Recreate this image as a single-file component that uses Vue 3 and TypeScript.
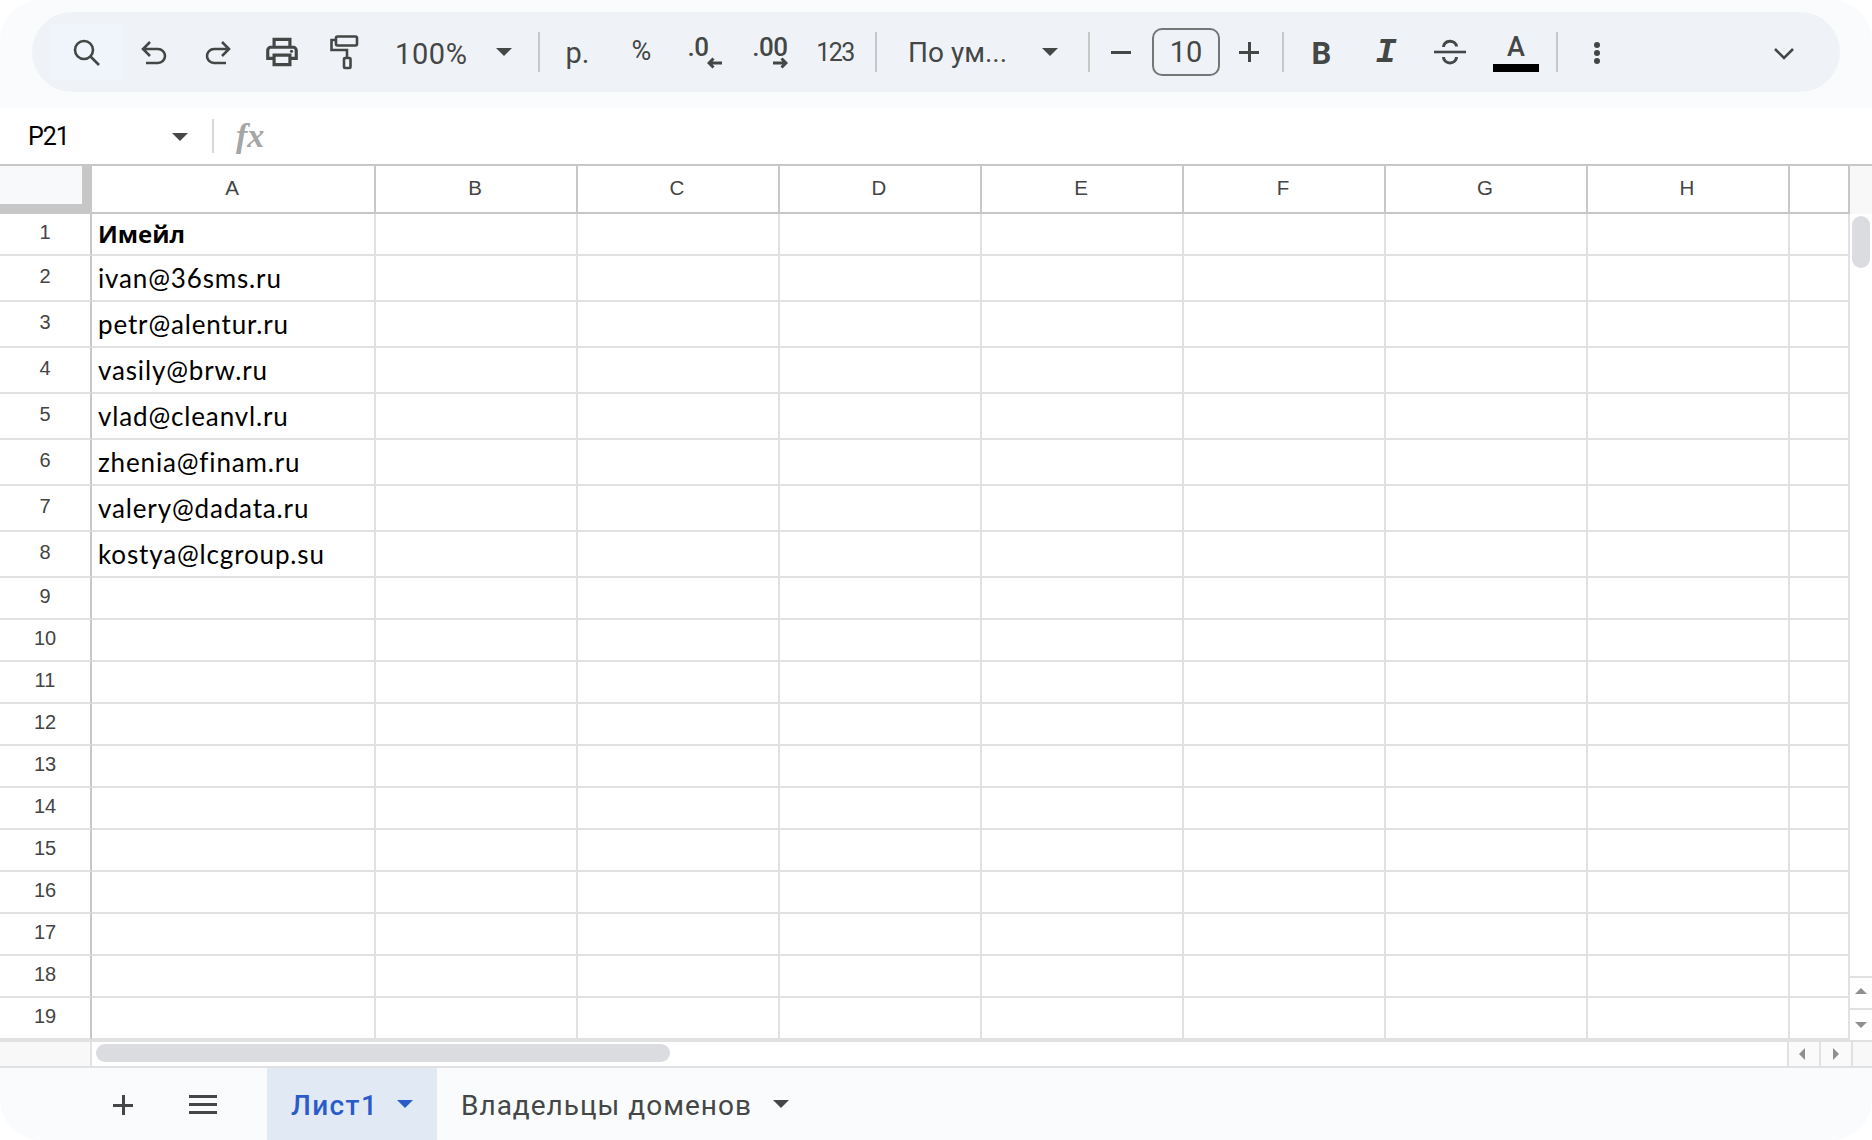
<script setup lang="ts">
const columns: string[] = ['A', 'B', 'C', 'D', 'E', 'F', 'G', 'H', '']
const emails: Record<number, string> = {
  1: 'Имейл',
  2: 'ivan@36sms.ru',
  3: 'petr@alentur.ru',
  4: 'vasily@brw.ru',
  5: 'vlad@cleanvl.ru',
  6: 'zhenia@finam.ru',
  7: 'valery@dadata.ru',
  8: 'kostya@lcgroup.su'
}
const rows: number[] = Array.from({ length: 19 }, (_, i) => i + 1)
const blanks: number[] = Array.from({ length: 8 }, (_, i) => i)
</script>

<template>
  <div class="page">
    <header class="topbar">
      <div class="pill">
        <div class="slot search">
          <svg width="34" height="34" viewBox="0 0 34 34" class="ic"><circle cx="14" cy="13" r="9" /><path d="M20.5 19.5 L29 28" /></svg>
        </div>
        <div class="slot w64">
          <svg width="30" height="30" viewBox="0 0 30 30" class="ic"><path d="M11 5 L4 12 L11 19 M4 12 H19 A7 7 0 0 1 19 26 H7" /></svg>
        </div>
        <div class="slot w64">
          <svg width="30" height="30" viewBox="0 0 30 30" class="ic"><path d="M19 5 L26 12 L19 19 M26 12 H11 A7 7 0 0 0 11 26 H23" /></svg>
        </div>
        <div class="slot w64">
          <svg width="38" height="38" viewBox="0 0 24 24" class="fill"><path d="M19 8h-1V3H6v5H5c-1.66 0-3 1.34-3 3v6h4v4h12v-4h4v-6c0-1.66-1.34-3-3-3zM8 5h8v3H8V5zm8 12v2H8v-4h8v2zm2-2v-2H6v2H4v-4c0-.55.45-1 1-1h14c.55 0 1 .45 1 1v4h-2z" /><circle cx="18" cy="11.5" r="1" /></svg>
        </div>
        <div class="slot w60">
          <svg width="30" height="36" viewBox="0 0 30 36" class="ic"><rect x="7" y="2.5" width="21" height="9" rx="1.5" /><path d="M7 6 H2.5 V16 H18 V23" /><rect x="15" y="24" width="6.5" height="10" rx="1" /></svg>
        </div>
        <div class="zoom">
          <span class="ttext pct100">100%</span>
          <i class="caret"></i>
        </div>
        <i class="sep"></i>
        <div class="slot rub"><span class="ttext rubt">р.</span></div>
        <div class="slot pct"><span class="ttext pctt">%</span></div>
        <div class="slot dec1">
          <div class="decimal">
            <span class="dtext one">.0</span>
            <svg width="16" height="12" viewBox="0 0 16 12" class="ic thin"><path d="M15 6 H2 M6.5 1.5 L2 6 L6.5 10.5" /></svg>
          </div>
        </div>
        <div class="slot dec2">
          <div class="decimal">
            <span class="dtext">.00</span>
            <svg width="16" height="12" viewBox="0 0 16 12" class="ic thin"><path d="M1 6 H14 M9.5 1.5 L14 6 L9.5 10.5" /></svg>
          </div>
        </div>
        <div class="slot num"><span class="ttext small">123</span></div>
        <i class="sep after-num"></i>
        <div class="font">
          <span class="ttext">По ум...</span>
          <i class="caret"></i>
        </div>
        <i class="sep"></i>
        <div class="slot minus"><i class="hbar"></i></div>
        <div class="size"><span class="ttext">10</span></div>
        <div class="slot plus"><i class="hbar"></i><i class="vbar"></i></div>
        <i class="sep"></i>
        <div class="slot bold"><span class="btext">B</span></div>
        <div class="slot italic"><span class="itext">I</span></div>
        <div class="slot strike">
          <svg width="34" height="28" viewBox="0 0 34 28" class="ic"><path d="M1 14 H33" /><path class="arc" d="M10.5 9 A6.5 5.5 0 0 1 23.5 8.5 M10.5 19 A6.5 6 0 0 0 23.5 19" /></svg>
        </div>
        <div class="slot color">
          <div class="colorbox">
            <span class="atext">A</span>
            <i class="swatch"></i>
          </div>
        </div>
        <i class="sep after-color"></i>
        <div class="slot dots"><i></i><i></i><i></i></div>
        <div class="chevron">
          <svg width="24" height="14" viewBox="0 0 24 14" class="ic"><path d="M3 2 L12 11 L21 2" /></svg>
        </div>
      </div>
    </header>

    <div class="formula">
      <span class="cellref">P21</span>
      <i class="caret namecaret"></i>
      <i class="fsep"></i>
      <span class="fx">fx</span>
    </div>

    <div class="sheetarea">
      <div class="sheet">
        <div class="row headrow">
          <div class="corner"></div>
          <div v-for="c in columns" :key="c" class="colhead">{{ c }}</div>
        </div>
        <div v-for="r in rows" :key="r" class="row" :class="{ tall: r >= 2 && r <= 8 }">
          <div class="rownum"><span>{{ r }}</span></div>
          <div class="cell first" :class="{ strong: r === 1 }">{{ emails[r] }}</div>
          <div v-for="b in blanks" :key="b" class="cell"></div>
        </div>
      </div>
      <aside class="vscroll">
        <div class="vhead"></div>
        <div class="vtrack"><div class="vthumb"></div></div>
        <div class="vbtn upbtn"><i class="tri up"></i></div>
        <div class="vbtn"><i class="tri down"></i></div>
      </aside>
    </div>

    <div class="hscroll">
      <div class="hleft"></div>
      <div class="htrack"><div class="hthumb"></div></div>
      <div class="hbtn leftbtn"><i class="tri left"></i></div>
      <div class="hbtn"><i class="tri right"></i></div>
      <div class="hcorner"></div>
    </div>

    <footer class="tabs">
      <div class="addsheet"><i class="hbar"></i><i class="vbar"></i></div>
      <div class="menu"><i></i><i></i><i></i></div>
      <div class="tab active">
        <span>Лист1</span>
        <i class="caret blue"></i>
      </div>
      <div class="tab">
        <span>Владельцы доменов</span>
        <i class="caret"></i>
      </div>
    </footer>
  </div>
</template>

<style scoped>
.page {
  width: 1872px;
  height: 1140px;
  overflow: hidden;
  background: #fff;
  font-family: "Liberation Sans", Arial, sans-serif;
  display: flex;
  flex-direction: column;
}
i { display: block; font-style: normal; }

.topbar {
  height: 108px;
  box-sizing: border-box;
  padding: 12px 32px 16px 32px;
  background: #f9fbfd;
  border-radius: 40px 40px 0 0;
}
.pill {
  height: 80px;
  box-sizing: border-box;
  padding-left: 18px;
  background: #eff3f8;
  border-radius: 40px;
  display: flex;
  align-items: center;
}
.slot { display: flex; align-items: center; justify-content: center; height: 56px; flex: none; }
.search { width: 72px; background: #f0f4fb; box-sizing: border-box; padding: 3px 0 0 2px; }
.w64 { width: 64px; }
.w60 { width: 60px; }
.ic { fill: none; stroke: #444746; stroke-width: 2.6; }
.ic.thin { stroke-width: 3; }
.ic .arc { stroke-width: 3; }
.fill { fill: #444746; }
.ttext { font-family: Roboto, "Noto Sans", sans-serif; font-size: 29px; color: #444746; white-space: nowrap; }
.ttext.small { font-size: 25px; letter-spacing: -1.5px; }
.pct100 { letter-spacing: 0.6px; padding-top: 3px; margin-left: -1px; }
.rubt { padding-top: 2px; }
.pctt { padding-bottom: 2px; font-size: 27px; }
.caret {
  width: 0;
  height: 0;
  border-left: 8px solid transparent;
  border-right: 8px solid transparent;
  border-top: 8px solid #444746;
  flex: none;
}
.caret.blue { border-top-color: #2a5bc9; }
.zoom { width: 164px; flex: none; box-sizing: border-box; padding-left: 22px; display: flex; align-items: center; gap: 28px; }
.sep { width: 2px; height: 40px; background: #c7c7c7; flex: none; }
.rub { width: 67px; margin-left: 4px; }
.pct { width: 61px; }
.dec1 { width: 66px; }
.dec2 { width: 64px; }
.num { width: 66px; }
.after-num { margin-left: 7px; }
.decimal { display: flex; flex-direction: column; align-items: flex-end; }
.dtext { font-family: Roboto, sans-serif; font-weight: 500; font-size: 26px; line-height: 24px; letter-spacing: -0.5px; color: #444746; }
.dtext.one { margin-right: 14px; }
.decimal svg { margin-top: -2px; }
.font { width: 211px; flex: none; box-sizing: border-box; padding-left: 31px; display: flex; align-items: center; gap: 33px; }
.font .ttext { width: 101px; font-size: 28px; }
.minus { width: 62px; position: relative; }
.plus { width: 62px; position: relative; }
.hbar { width: 20px; height: 3px; background: #444746; }
.vbar { width: 3px; height: 20px; background: #444746; position: absolute; left: 28px; top: 18px; }
.plus .hbar { margin-right: 4px; }
.size {
  width: 68px;
  height: 48px;
  box-sizing: border-box;
  border: 2px solid #747775;
  border-radius: 10px;
  display: flex;
  align-items: center;
  justify-content: center;
  flex: none;
}
.bold { width: 75px; }
.btext { font-family: Roboto, sans-serif; font-weight: 700; font-size: 31px; color: #444746; padding-top: 2px; }
.italic { width: 54px; }
.itext { font-family: "Liberation Mono", monospace; font-weight: 700; font-style: italic; font-size: 35px; color: #444746; padding-top: 2px; }
.strike { width: 74px; }
.color { width: 58px; }
.colorbox { width: 46px; height: 40px; display: flex; flex-direction: column; align-items: center; justify-content: space-between; box-sizing: border-box; padding-top: 3px; }
.atext { font-family: Roboto, sans-serif; font-weight: 500; font-size: 27px; line-height: 24px; color: #444746; }
.swatch { width: 46px; height: 8px; background: #000; flex: none; }
.after-color { margin-left: 11px; }
.dots { width: 78px; flex-direction: column; gap: 2px; padding-top: 2px; box-sizing: border-box; }
.dots i { width: 6px; height: 6px; border-radius: 50%; background: #444746; }
.chevron { margin-left: auto; margin-right: 44px; display: flex; padding-top: 4px; }

.formula { height: 56px; display: flex; align-items: center; flex: none; box-sizing: border-box; padding-left: 28px; background: #fff; }
.cellref { width: 144px; font-family: Roboto, sans-serif; font-size: 25px; letter-spacing: -1px; color: #000; }
.namecaret { margin-top: 2px; }
.fsep { width: 2px; height: 34px; background: #d8d8d8; margin-left: 24px; margin-top: 0; }
.fx { font-family: "Liberation Serif", serif; font-style: italic; font-weight: 700; font-size: 34px; color: #a6a6a6; margin-left: 22px; }

.sheetarea { display: flex; flex: none; height: 876px; border-top: 2px solid #c7c7c7; box-sizing: border-box; }
.sheet { width: 1850px; flex: none; }
.row {
  display: grid;
  grid-template-columns: 92px 284px repeat(7, 202px) 60px;
  height: 42px;
}
.row.tall { height: 46px; }
.row.headrow { height: 48px; }
.row > div { box-sizing: border-box; }
.corner { background: #f8f9fb; border-right: 10px solid #c7c7c7; border-bottom: 10px solid #c7c7c7; }
.colhead {
  border-right: 2px solid #c7c7c7;
  border-bottom: 2px solid #c7c7c7;
  display: flex;
  align-items: center;
  justify-content: center;
  font-size: 20.5px;
  color: #444;
  padding: 0 2px 2px 0;
}
.rownum {
  border-right: 2px solid #c7c7c7;
  border-bottom: 2px solid #e1e1e1;
  display: flex;
  align-items: center;
  justify-content: center;
  font-size: 20px;
  color: #444;
  padding-bottom: 3px;
}
.row.tall .rownum { padding-bottom: 4px; }
.cell {
  border-right: 2px solid #e1e1e1;
  border-bottom: 2px solid #e1e1e1;
}
.cell.first {
  padding-left: 6px;
  font-family: Lato, "Open Sans", sans-serif;
  font-size: 26px;
  letter-spacing: 0.85px;
  color: #000;
  display: flex;
  align-items: center;
  white-space: nowrap;
}
.cell.strong { font-family: "Open Sans", "Noto Sans", sans-serif; font-weight: 700; font-size: 24px; letter-spacing: 0; padding-bottom: 2px; }

.vscroll { flex: 1; display: flex; flex-direction: column; }
.vhead { height: 48px; background: #f8f8f8; flex: none; }
.vtrack { flex: 1; }
.vthumb { width: 18px; height: 52px; margin: 2px 0 0 2px; border-radius: 9px; background: #dadce0; }
.vbtn {
  height: 32px;
  flex: none;
  box-sizing: border-box;
  border-top: 2px solid #e1e1e1;
  display: flex;
  align-items: center;
  justify-content: center;
}
.upbtn { padding-bottom: 4px; }
.tri { width: 0; height: 0; }
.tri.up { border-left: 6px solid transparent; border-right: 6px solid transparent; border-bottom: 6px solid #8f8f8f; }
.tri.down { border-left: 6px solid transparent; border-right: 6px solid transparent; border-top: 6px solid #8f8f8f; }
.tri.left { border-top: 6px solid transparent; border-bottom: 6px solid transparent; border-right: 6px solid #8f8f8f; }
.tri.right { border-top: 6px solid transparent; border-bottom: 6px solid transparent; border-left: 6px solid #8f8f8f; }

.hscroll {
  height: 26px;
  flex: none;
  box-sizing: border-box;
  border-top: 2px solid #e1e1e1;
  display: flex;
}
.hleft { width: 92px; flex: none; box-sizing: border-box; background: #f8f8f8; border-right: 2px solid #e1e1e1; }
.htrack { width: 1695px; flex: none; box-sizing: border-box; padding: 2px 0 0 4px; }
.hthumb { width: 574px; height: 18px; border-radius: 9px; background: #dadce0; }
.hbtn {
  width: 32px;
  flex: none;
  box-sizing: border-box;
  border-left: 2px solid #e1e1e1;
  display: flex;
  align-items: center;
  justify-content: center;
  background: #fafafa;
}
.leftbtn { padding-right: 4px; }
.hcorner { flex: 1; background: #f8f8f8; border-left: 2px solid #e1e1e1; }

.tabs {
  flex: 1;
  box-sizing: border-box;
  border-top: 2px solid #e1e1e1;
  background: #f9fbfd;
  border-radius: 0 0 40px 40px;
  display: flex;
  padding-left: 113px;
  align-items: stretch;
}
.addsheet { width: 20px; position: relative; display: flex; align-items: center; margin-right: 56px; padding-top: 2px; }
.addsheet .hbar { width: 20px; }
.addsheet .vbar { left: 8.5px; top: 27px; }
.menu { width: 28px; display: flex; flex-direction: column; justify-content: center; gap: 5px; margin-right: 50px; }
.menu i { height: 3px; background: #444746; }
.tab {
  display: flex;
  align-items: center;
  gap: 21px;
  box-sizing: border-box;
  padding: 2px 24px 0 24px;
  font-family: Roboto, sans-serif;
  font-size: 28px;
  letter-spacing: 1px;
  color: #444746;
  white-space: nowrap;
}
.tab.active {
  width: 170px;
  gap: 19px;
  background: #e1e9f5;
  color: #2a5bc9;
  font-weight: 500;
  letter-spacing: 1.4px;
}
.tab .caret { margin-top: -2px; }
</style>

<style>
html, body { margin: 0; padding: 0; background: #fff; }
</style>
